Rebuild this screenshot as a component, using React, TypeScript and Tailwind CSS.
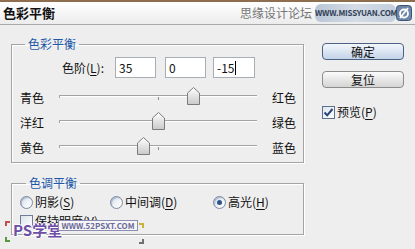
import React from "react";

type SliderProps = { left: string; right: string; value: number; tick?: boolean };

const Slider = ({ left, right, value, tick = true }: SliderProps) => {
  const pos = ((value + 100) / 200) * 198;
  return (
    <div className="flex h-[25px] items-center pl-[8px]">
      <span className="w-[24px] leading-[14px]">{left}</span>
      <div className="relative ml-[15px] h-[25px] w-[198px]">
        <div className="absolute left-0 right-0 top-[10px] h-[2px] border-t border-b border-t-[#a3a3a3] border-b-white" />
        <div className="absolute left-0 top-[10px] h-[3px] w-px bg-[#a3a3a3]" />
        {tick && <div className="absolute left-[99px] top-[12px] h-[3px] w-px bg-[#8e8e8e]" />}
        <svg
          className="absolute top-[2px]"
          style={{ left: pos - 6 }}
          width="13"
          height="18"
          viewBox="0 0 13 18"
        >
          <defs>
            <linearGradient id={`g${left}`} x1="0" y1="0" x2="0" y2="1">
              <stop offset="0" stopColor="#ffffff" />
              <stop offset="1" stopColor="#c9c9c9" />
            </linearGradient>
          </defs>
          <path
            d="M0.5 6 L6.5 0.5 L12.5 6 L12.5 17.5 L0.5 17.5 Z"
            fill={`url(#g${left})`}
            stroke="#7c7c7c"
          />
        </svg>
      </div>
      <span className="ml-[15px] leading-[14px]">{right}</span>
    </div>
  );
};

type RadioProps = { checked?: boolean; label: string; k: string; className: string };

const Radio = ({ checked, label, k, className }: RadioProps) => (
  <div className={`flex items-center ${className}`}>
    <span className="flex h-[13px] w-[13px] items-center justify-center rounded-full border border-[#7b8aa3] bg-gradient-to-br from-[#d6dde8] via-[#eef2f7] to-[#ffffff] shadow-[inset_1px_1px_1px_rgba(120,140,170,0.5)]">
      {checked && <span className="h-[5px] w-[5px] rounded-full bg-[#2f5589]" />}
    </span>
    <span className="ml-[2px] leading-[16px]">
      {label}(<span className="underline underline-offset-2">{k}</span>)
    </span>
  </div>
);

export default function App() {
  return (
    <div className="relative h-[249px] w-[415px] overflow-hidden bg-[#eeeeee] text-[12px] text-[#111] font-['Noto_Sans_CJK_SC','Noto_Sans',sans-serif]">
      {/* title bar */}
      <div className="relative flex h-[25px] items-center border-t-2 border-b border-t-[#8d6e4e] border-b-[#a9a9a9] bg-gradient-to-b from-white to-[#ececec] pl-[3px]">
        <span className="text-[13px] font-bold leading-[16px]">色彩平衡</span>
        <span className="ml-auto text-[12px] leading-[16px] text-[#767676]">思缘设计论坛</span>
        <div className="ml-[3px] flex h-[18px] w-[81px] items-center rounded-[6px] bg-gradient-to-r from-[#b9c6d6] via-[#d4dce6] to-[#c3cfdd]">
          <span className="text-[8px] font-bold leading-[10px] tracking-[-0.2px] text-[#2f3e55]">
            WWW.MISSYUAN.COM
          </span>
        </div>
        <svg className="mr-[3px]" width="16" height="16" viewBox="0 0 16 16">
          <rect x="0.5" y="0.5" width="15" height="15" rx="3" fill="#6e86a8" stroke="#3e5476" />
          <circle cx="8" cy="8.5" r="4" fill="none" stroke="#fff" strokeWidth="1.8" />
          <path d="M4 13 L12 3" stroke="#fff" strokeWidth="1.8" />
        </svg>
      </div>

      <div className="flex">
        {/* left column */}
        <div className="ml-[11px] w-[293px]">
          <fieldset className="mt-[11px] border border-[#a4a4a4] pb-[2px] shadow-[1px_1px_0_#ffffff,inset_1px_1px_0_#ffffff]">
            <legend className="ml-[13px] px-[3px] leading-[16px] text-[#2257a8]">色彩平衡</legend>
            <div className="mt-[5px] flex items-center pl-[50px]">
              <span className="w-[53px] leading-[16px]">
                色阶(<span className="underline underline-offset-2">L</span>):
              </span>
              <div className="flex h-[21px] w-[41px] items-center border border-[#a9adb4] bg-white pl-[3px]">35</div>
              <div className="ml-[9px] flex h-[21px] w-[41px] items-center border border-[#a9adb4] bg-white pl-[3px]">0</div>
              <div className="ml-[7px] flex h-[21px] w-[42px] items-center border border-[#a9adb4] bg-white pl-[3px]">
                -15<span className="ml-px h-[14px] w-px bg-black" />
              </div>
            </div>
            <div className="mt-[7px]">
              <Slider left="青色" right="红色" value={35} />
              <Slider left="洋红" right="绿色" value={0} tick={false} />
              <Slider left="黄色" right="蓝色" value={-15} />
            </div>
          </fieldset>

          <fieldset className="mt-[12px] border border-[#a4a4a4] pb-[5px] shadow-[1px_1px_0_#ffffff,inset_1px_1px_0_#ffffff]">
            <legend className="ml-[14px] px-[3px] leading-[16px] text-[#2257a8]">色调平衡</legend>
            <div className="mt-[3px] flex pl-[8px]">
              <Radio label="阴影" k="S" className="w-[90px]" />
              <Radio label="中间调" k="D" className="w-[103px]" />
              <Radio label="高光" k="H" checked className="" />
            </div>
            <div className="mt-[3px] flex items-center pl-[8px]">
              <span className="h-[13px] w-[13px] border border-[#6f7f99] bg-gradient-to-br from-[#dde3ec] to-white" />
              <span className="ml-[2px] leading-[16px]">
                保持明度(<span className="underline underline-offset-2">V</span>)
              </span>
            </div>
          </fieldset>
        </div>

        {/* right column */}
        <div className="ml-[18px] flex flex-col">
          <button className="mt-[18px] flex h-[17px] w-[82px] items-center justify-center rounded-[4px] border border-[#4c6283] bg-gradient-to-b from-[#f3f7fc] to-[#c3d3e8] leading-[14px]">
            确定
          </button>
          <button className="mt-[11px] flex h-[17px] w-[82px] items-center justify-center rounded-[4px] border border-[#8c8c8c] bg-gradient-to-b from-[#fbfbfb] to-[#d4d4d4] leading-[14px]">
            复位
          </button>
          <div className="mt-[16px] flex items-center">
            <span className="flex h-[13px] w-[13px] items-center justify-center border border-[#5c6f8c] bg-gradient-to-br from-[#dfe5ee] to-white">
              <svg width="11" height="11" viewBox="0 0 11 11">
                <path d="M1.5 5.5 L4.2 8.3 L9.5 2" fill="none" stroke="#24467e" strokeWidth="2" />
              </svg>
            </span>
            <span className="ml-[2px] leading-[16px]">
              预览(<span className="underline underline-offset-2">P</span>)
            </span>
          </div>
        </div>
      </div>

      {/* bottom watermark */}
      <div className="absolute left-[5px] top-[221px] h-[5px] w-[5px] border-l-2 border-t-2 border-[#c0504d]" />
      <div className="absolute left-[5px] top-[237px] h-[5px] w-[5px] border-b-2 border-l-2 border-[#5a9a3a]" />
      <div className="absolute left-[139px] top-[223px] h-[5px] w-[5px] border-r-2 border-t-2 border-[#c9b23a]" />
      <div className="absolute left-[139px] top-[239px] h-[5px] w-[5px] border-b-2 border-r-2 border-[#707070]" />
      <div className="absolute left-[13px] top-[221px] text-[15px] font-bold leading-[18px] text-[#6d4ea6] [text-shadow:1px_0_0_#fff,-1px_0_0_#fff,0_1px_0_#fff,0_-1px_0_#fff]">
        PS学堂
      </div>
      <div className="absolute left-[58px] top-[220px] flex h-[11px] w-[80px] items-center justify-center border border-[#8d8db0] bg-[#f5f5fa] text-[8px] font-bold leading-[9px] text-[#6a6a92]">
        WWW.52PSXT.COM
      </div>
    </div>
  );
}
